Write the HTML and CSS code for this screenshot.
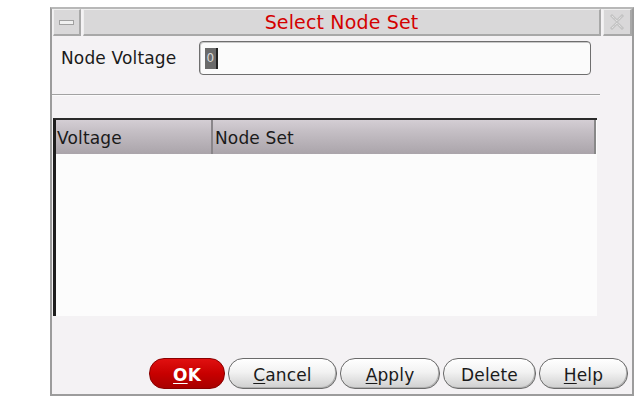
FILE: index.html
```html
<!DOCTYPE html>
<html>
<head>
<meta charset="utf-8">
<link rel="stylesheet" href="styles.css">
</head>
<body>
<div class="window">
  <div class="titlebar">
    <div class="tb-btn tb-min"><span class="min-glyph"></span></div>
    <div class="tb-title">Select Node Set</div>
    <div class="tb-btn tb-close">
      <svg width="16" height="16" viewBox="0 0 16 16">
        <path d="M3 2 L8 7 L13 2 M3 14 L8 9 L13 14" fill="none" stroke="#c4c4c4" stroke-width="3" stroke-linecap="square"/>
        <path d="M3 2 L8 7 L13 2 M3 14 L8 9 L13 14" fill="none" stroke="#efefef" stroke-width="1" stroke-dasharray="1 1"/>
      </svg>
    </div>
  </div>
  <div class="field-row">
    <label class="field-label">Node Voltage</label>
    <div class="field-input"><span class="sel">0</span></div>
  </div>
  <div class="separator"></div>
  <div class="table">
    <div class="thead">
      <div class="th th-voltage">Voltage</div>
      <div class="th th-nodeset">Node Set</div>
    </div>
    <div class="tbody"></div>
  </div>
  <div class="buttons">
    <button class="btn btn-ok"><u>O</u>K</button>
    <button class="btn btn-cancel"><u>C</u>ancel</button>
    <button class="btn btn-apply"><u>A</u>pply</button>
    <button class="btn btn-delete">Delete</button>
    <button class="btn btn-help"><u>H</u>elp</button>
  </div>
</div>
</body>
</html>
```

FILE: styles.css
```css
html, body {
  margin: 0;
  padding: 0;
  background: #ffffff;
}
body {
  font-family: "DejaVu Sans", sans-serif;
  font-size: 17px;
  color: #1a1a1a;
  letter-spacing: 0.15px;
}
.window {
  margin: 7px 0 0 50px;
  width: 580px;
  height: 385px;
  border: 2px solid #9c9c9c;
  border-top-color: #b8b8b8;
  background: #f4f2f4;
  display: flex;
  flex-direction: column;
}
.titlebar {
  display: flex;
  height: 27px;
  gap: 2px;
  padding-left: 1px;
}
.tb-btn, .tb-title {
  background: #d9d8d9;
  border-top: 1px solid #efefef;
  border-left: 1px solid #efefef;
  border-right: 2px solid #a8a8a8;
  border-bottom: 2px solid #a8a8a8;
  box-sizing: border-box;
}
.tb-min {
  width: 28px;
  display: flex;
  align-items: center;
  justify-content: center;
}
.min-glyph {
  display: block;
  width: 15px;
  height: 5px;
  box-sizing: border-box;
  border: 1px solid #a0a0a0;
  background: #f0f0f0;
  margin-top: 1px;
}
.tb-title {
  flex: 1;
  text-align: center;
  color: #d40000;
  font-size: 19px;
  line-height: 24px;
}
.tb-close {
  width: 29px;
  display: flex;
  align-items: center;
  justify-content: center;
}
.field-row {
  display: flex;
  align-items: center;
  margin-top: 5px;
  padding-left: 9px;
}
.field-label {
  width: 138px;
}
.field-input {
  width: 392px;
  height: 34px;
  box-sizing: border-box;
  border: 1px solid #6e6e6e;
  border-radius: 4px;
  background: #fbfbfb;
  box-shadow: inset 1px 1px 0 #c8c8c8;
  display: flex;
  align-items: center;
  padding-left: 5px;
}
.sel {
  display: inline-block;
  width: 11px;
  height: 21px;
  background: #6a6a6a;
  color: #d8d8d8;
  font-size: 12px;
  line-height: 21px;
  text-align: center;
  border-right: 2px solid #222;
}
.separator {
  margin-top: 19px;
  width: 548px;
  height: 1px;
  background: #a2a2a2;
  border-bottom: 1px solid #fbfbfb;
}
.table {
  margin-top: 22px;
  margin-left: 1px;
  width: 544px;
  height: 198px;
  box-sizing: border-box;
  border-top: 2px solid #2a2a2a;
  border-left: 3px solid #1e1e1e;
  background: #fcfcfc;
  display: flex;
  flex-direction: column;
}
.thead {
  display: flex;
  height: 34px;
  background: linear-gradient(#d4ced4, #c4bec4 35%, #aaa4aa);
  border-right: 2px solid #888;
  margin-right: 1px;
}
.th {
  line-height: 36px;
  padding-left: 1px;
}
.th-voltage {
  width: 154px;
  border-right: 2px solid #8a868a;
}
.th-nodeset {
  padding-left: 2px;
}
.tbody {
  flex: 1;
}
.buttons {
  margin-top: auto;
  margin-bottom: 5px;
  display: flex;
  justify-content: flex-end;
  gap: 3px;
  padding-right: 4px;
}
.btn {
  height: 31px;
  box-sizing: border-box;
  border: 1px solid #6a6a6a;
  border-radius: 15px;
  background: linear-gradient(#ffffff, #f2f2f2 45%, #cfcfcf);
  box-shadow: inset -1px -1px 0 #b0b0b0;
  font-family: "DejaVu Sans", sans-serif;
  font-size: 17px;
  letter-spacing: 0.15px;
  color: #1a1a1a;
  padding: 2px 0 0 0;
  text-align: center;
}
.btn u {
  text-underline-offset: 2px;
}
.btn-ok {
  width: 76px;
  background: linear-gradient(#e01010, #c80000 50%, #a80000);
  border-color: #8a0000;
  color: #ffffff;
  font-weight: bold;
  box-shadow: none;
}
.btn-cancel { width: 109px; }
.btn-apply { width: 100px; }
.btn-delete { width: 93px; }
.btn-help { width: 89px; }
```
